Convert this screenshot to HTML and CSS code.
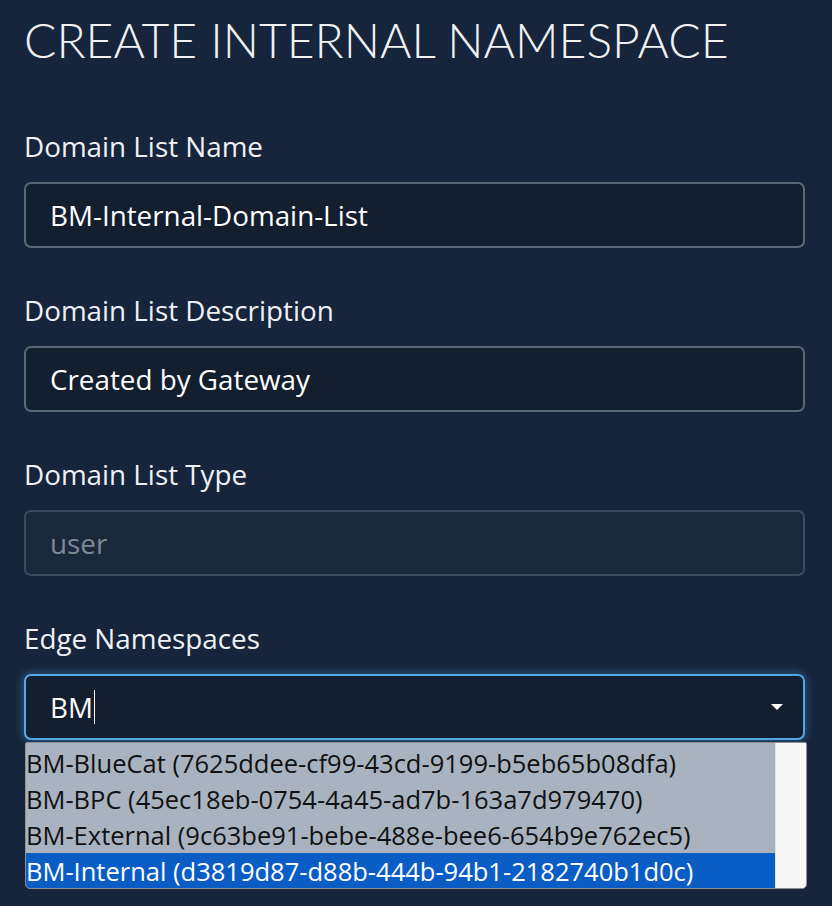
FILE: index.html
```html
<!DOCTYPE html>
<html lang="en">
<head>
<meta charset="utf-8">
<title>Create Internal Namespace</title>
<link rel="stylesheet" href="styles.css">
</head>
<body>
<main class="page">
  <h1 class="title">CREATE INTERNAL NAMESPACE</h1>
  <div class="field">
    <label class="label">Domain List Name</label>
    <div class="input">BM-Internal-Domain-List</div>
  </div>
  <div class="field">
    <label class="label">Domain List Description</label>
    <div class="input">Created by Gateway</div>
  </div>
  <div class="field">
    <label class="label">Domain List Type</label>
    <div class="input disabled">user</div>
  </div>
  <div class="field">
    <label class="label">Edge Namespaces</label>
    <div class="combo">
      <div class="input focused"><span class="typed">BM</span><span class="cursor"></span><span class="caret"></span></div>
      <div class="listbox">
        <ul class="options">
          <li class="option">BM-BlueCat (7625ddee-cf99-43cd-9199-b5eb65b08dfa)</li>
          <li class="option">BM-BPC (45ec18eb-0754-4a45-ad7b-163a7d979470)</li>
          <li class="option">BM-External (9c63be91-bebe-488e-bee6-654b9e762ec5)</li>
          <li class="option selected">BM-Internal (d3819d87-d88b-444b-94b1-2182740b1d0c)</li>
        </ul>
        <div class="scrollbar"></div>
      </div>
    </div>
  </div>
</main>
</body>
</html>
```
FILE: styles.css
```css
html, body {
  margin: 0;
  padding: 0;
  background: #16253b;
  height: 100%;
}
body {
  font-family: "Open Sans", "Liberation Sans", sans-serif;
  color: #eef1f5;
}
.page {
  padding: 8px 27px 0 24px;
  display: flex;
  flex-direction: column;
}
.title {
  margin: 0 0 56px 0;
  font-family: Lato, "Open Sans", sans-serif;
  font-weight: 300;
  font-size: 48px;
  line-height: 64px;
  letter-spacing: 0;
  color: #f0f2f4;
}
.field {
  display: flex;
  flex-direction: column;
  margin-bottom: 44px;
}
.label {
  font-size: 27.8px;
  line-height: 36px;
  margin-bottom: 18px;
  color: #eef1f5;
}
.input {
  box-sizing: border-box;
  height: 66px;
  border: 2px solid #5c6779;
  border-radius: 7px;
  background: #131e2f;
  padding: 0 24px;
  display: flex;
  align-items: center;
  font-size: 27.8px;
  color: #ffffff;
}
.input.disabled {
  background: #1a283b;
  border-color: #3c4a5d;
  color: #7e8896;
}
.combo {
  position: relative;
}
.input.focused {
  border-color: #56a6e4;
  box-shadow: 0 0 10px 1px rgba(70, 150, 220, 0.45);
}
.cursor {
  display: inline-block;
  width: 1.5px;
  height: 34px;
  background: #ffffff;
  margin-left: 1px;
}
.caret {
  margin-left: auto;
  margin-right: -4px;
  width: 0;
  height: 0;
  border-left: 6px solid transparent;
  border-right: 6px solid transparent;
  border-top: 6px solid #ffffff;
}
.listbox {
  position: absolute;
  left: 1px;
  right: -2px;
  top: calc(100% + 2px);
  box-sizing: border-box;
  height: 147px;
  border: 1px solid #8b8f95;
  border-radius: 2px 2px 5px 5px;
  background: #a9b3c0;
  display: flex;
  overflow: hidden;
}
.options {
  list-style: none;
  margin: 0;
  padding: 2px 0 0 0;
  flex: 1;
}
.option {
  height: 36px;
  line-height: 36px;
  font-size: 25.5px;
  color: #111111;
  white-space: nowrap;
  padding-left: 0;
}
.option.selected {
  background: #0b5dc6;
  color: #ffffff;
}
.scrollbar {
  width: 30px;
  background: #f7f7f7;
  border-left: 1px solid #e4e4e4;
}
```
